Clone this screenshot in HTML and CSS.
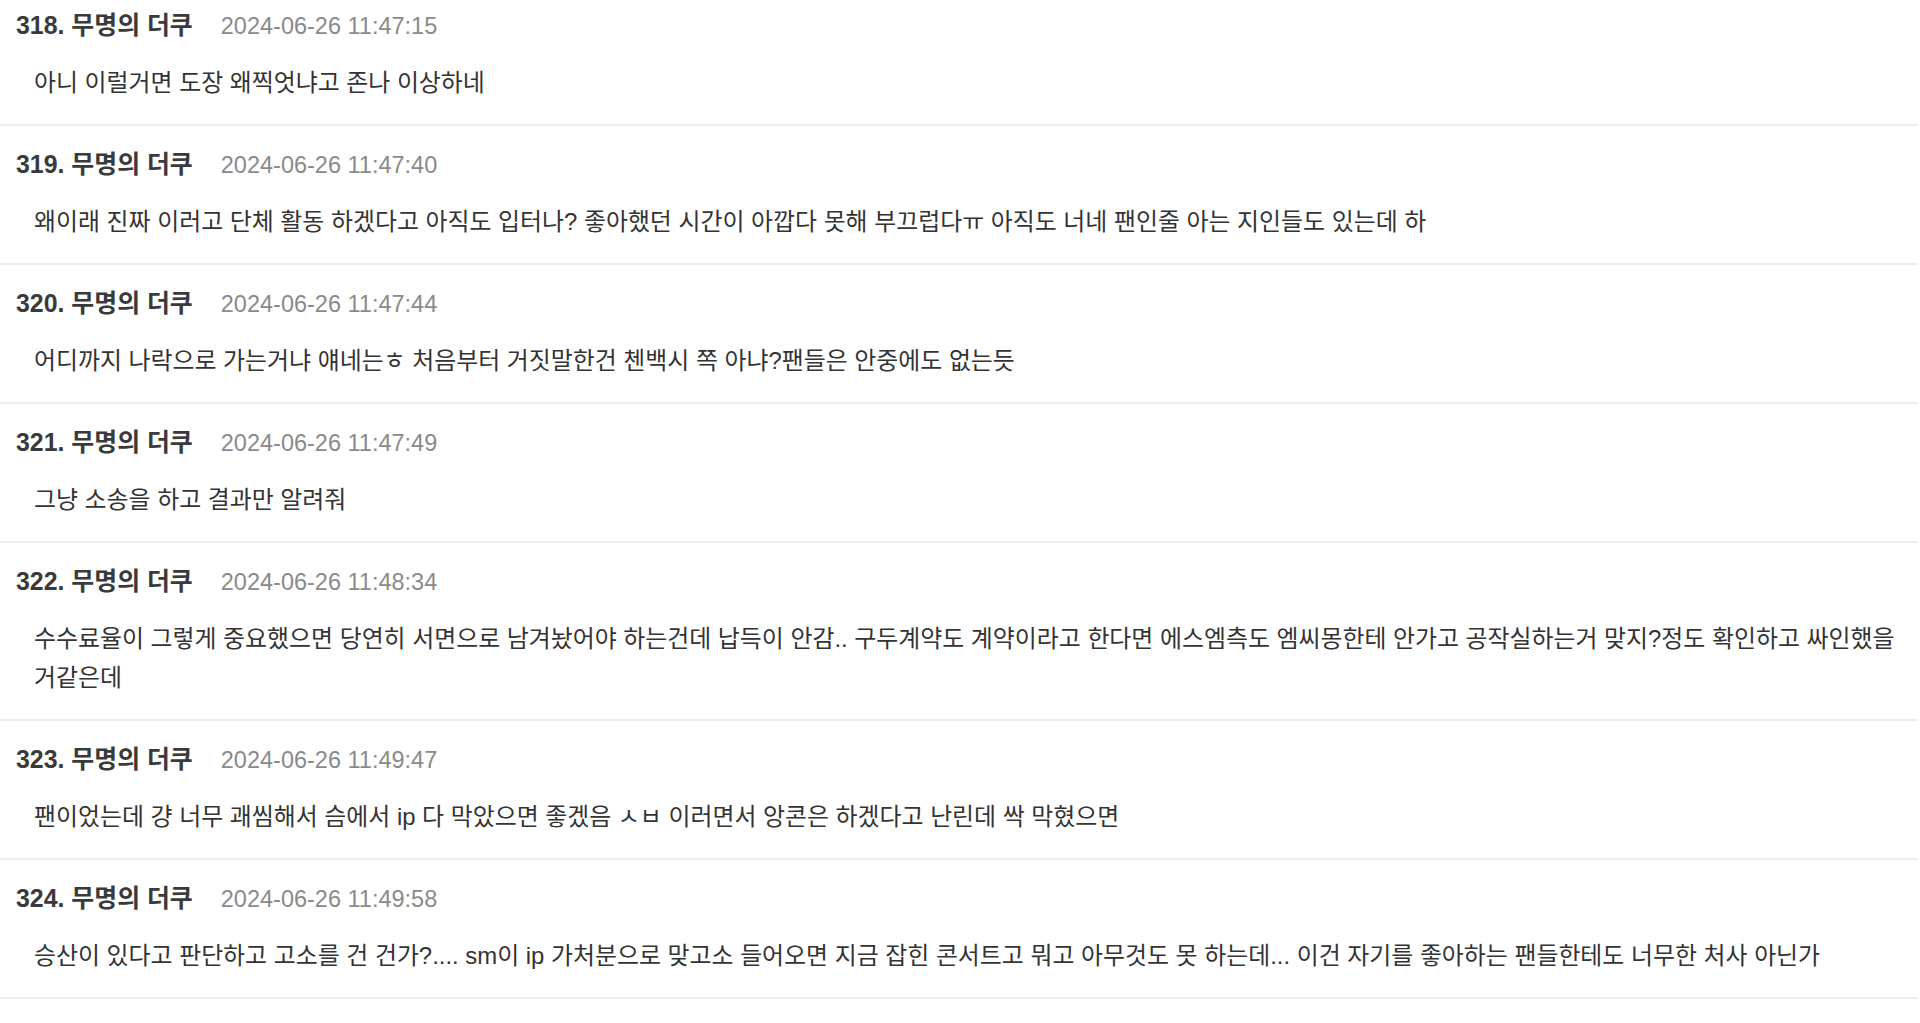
FILE: index.html
```html
<!DOCTYPE html>
<html lang="ko">
<head>
<meta charset="utf-8">
<link rel="stylesheet" href="styles.css">
</head>
<body>
<div class="list">
  <div class="item">
    <div class="head"><span class="name">318. 무명의 더쿠</span><span class="date">2024-06-26 11:47:15</span></div>
    <div class="body">아니 이럴거면 도장 왜찍엇냐고 존나 이상하네</div>
  </div>
  <div class="item">
    <div class="head"><span class="name">319. 무명의 더쿠</span><span class="date">2024-06-26 11:47:40</span></div>
    <div class="body">왜이래 진짜 이러고 단체 활동 하겠다고 아직도 입터나? 좋아했던 시간이 아깝다 못해 부끄럽다ㅠ 아직도 너네 팬인줄 아는 지인들도 있는데 하</div>
  </div>
  <div class="item">
    <div class="head"><span class="name">320. 무명의 더쿠</span><span class="date">2024-06-26 11:47:44</span></div>
    <div class="body">어디까지 나락으로 가는거냐 얘네는ㅎ 처음부터 거짓말한건 첸백시 쪽 아냐?팬들은 안중에도 없는듯</div>
  </div>
  <div class="item">
    <div class="head"><span class="name">321. 무명의 더쿠</span><span class="date">2024-06-26 11:47:49</span></div>
    <div class="body">그냥 소송을 하고 결과만 알려줘</div>
  </div>
  <div class="item">
    <div class="head"><span class="name">322. 무명의 더쿠</span><span class="date">2024-06-26 11:48:34</span></div>
    <div class="body">수수료율이 그렇게 중요했으면 당연히 서면으로 남겨놨어야 하는건데 납득이 안감.. 구두계약도 계약이라고 한다면 에스엠측도 엠씨몽한테 안가고 공작실하는거 맞지?정도 확인하고 싸인했을 거같은데</div>
  </div>
  <div class="item">
    <div class="head"><span class="name">323. 무명의 더쿠</span><span class="date">2024-06-26 11:49:47</span></div>
    <div class="body">팬이었는데 걍 너무 괘씸해서 슴에서 ip 다 막았으면 좋겠음 ㅅㅂ 이러면서 앙콘은 하겠다고 난린데 싹 막혔으면</div>
  </div>
  <div class="item">
    <div class="head"><span class="name">324. 무명의 더쿠</span><span class="date">2024-06-26 11:49:58</span></div>
    <div class="body">승산이 있다고 판단하고 고소를 건 건가?.... sm이 ip 가처분으로 맞고소 들어오면 지금 잡힌 콘서트고 뭐고 아무것도 못 하는데... 이건 자기를 좋아하는 팬들한테도 너무한 처사 아닌가</div>
  </div>
  <div class="item">
    <div class="head"><span class="name">325. 무명의 더쿠</span><span class="date">2024-06-26 11:50:12</span></div>
    <div class="body">&nbsp;</div>
  </div>
</div>
</body>
</html>
```

FILE: styles.css
```css
html, body {
  margin: 0;
  padding: 0;
  background: #ffffff;
  overflow: hidden;
}

body {
  font-family: "Liberation Sans", "Noto Sans CJK KR", sans-serif;
  color: #333333;
}

.list {
  width: 1918px;
  margin-top: -13px;
}

.item {
  padding: 23px 10px 22px 16px;
  border-bottom: 2px solid #ededed;
}

.head {
  display: flex;
  align-items: baseline;
  height: 30px;
  line-height: 30px;
}

.name {
  font-size: 24.9px;
  font-weight: bold;
  color: #3a3a3a;
}

.date {
  margin-left: 28px;
  font-size: 23.5px;
  color: #8a8a8a;
}

.body {
  margin-top: 23px;
  padding-left: 18px;
  font-size: 23.9px;
  line-height: 39px;
  color: #333333;
}
```
